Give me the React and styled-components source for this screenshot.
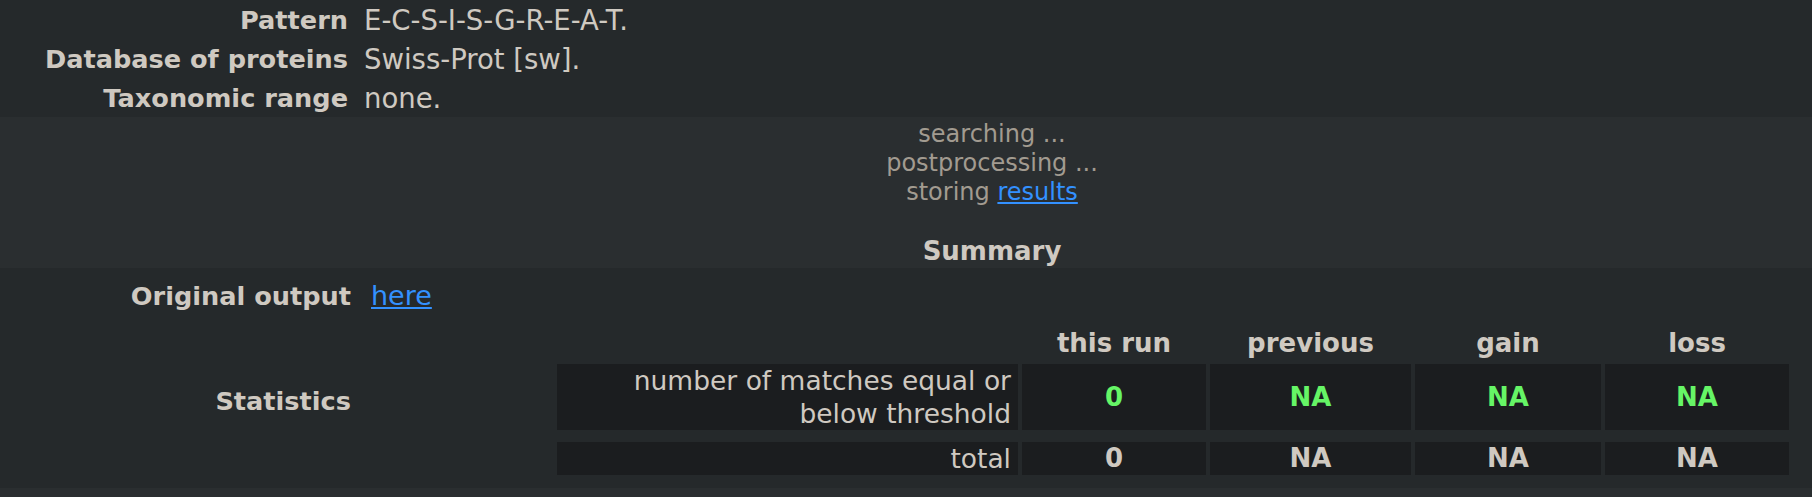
import React from 'react';
import styled, { createGlobalStyle } from 'styled-components';

const GlobalStyle = createGlobalStyle`
  html, body {
    margin: 0;
    padding: 0;
    background: #25292b;
  }
  body {
    font-family: "DejaVu Sans", Verdana, sans-serif;
    color: #cfc9c1;
  }
`;

const Page = styled.div`
  width: 1812px;
  display: flex;
  flex-direction: column;
`;

const InfoTable = styled.div`
  display: grid;
  grid-template-columns: 348px 1fr;
  grid-auto-rows: 39px;
  column-gap: 16px;
  align-items: center;
  height: 117px;
  background: #25292b;
`;

const InfoLabel = styled.div`
  text-align: right;
  font-weight: bold;
  font-size: 25.6px;
  white-space: nowrap;
`;

const InfoValue = styled.div`
  font-size: 27.5px;
  white-space: nowrap;
`;

const Progress = styled.div`
  background: #2a2e30;
  height: 151px;
  box-sizing: border-box;
  padding: 3px 0 0 172px;
  text-align: center;
`;

const ProgressLine = styled.div`
  font-size: 24px;
  line-height: 29px;
  color: #a29b90;
`;

const Link = styled.a`
  color: #3391ff;
  text-decoration: underline;
`;

const SummaryTitle = styled.div`
  margin-top: 28px;
  font-weight: bold;
  font-size: 26px;
  line-height: 33px;
`;

const SummarySection = styled.div`
  display: grid;
  grid-template-columns: 351px 1fr;
  column-gap: 20px;
  row-gap: 9px;
  align-items: center;
  padding: 10px 0 9px;
  background: #25292b;
`;

const SummaryLabel = styled.div`
  text-align: right;
  font-weight: bold;
  font-size: 25.6px;
  line-height: 36px;
  white-space: nowrap;
`;

const SummaryValue = styled.div`
  font-size: 27px;
  line-height: 36px;
`;

const StatsWrap = styled.div`
  display: flex;
  justify-content: flex-end;
  padding: 4px 23px 4px 0;
`;

const StatsTable = styled.div`
  display: grid;
  grid-template-columns: 461px 184px 201px 186px 184px;
  grid-template-rows: 33px 66px 41px;
  column-gap: 4px;
  row-gap: 4px;
`;

const HeadCell = styled.div`
  font-weight: bold;
  font-size: 26px;
  line-height: 33px;
  text-align: center;
`;

const LabelCell = styled.div`
  background: #1b1d1f;
  font-size: 26.5px;
  line-height: 33px;
  text-align: right;
  padding: 0 7px 0 20px;
  margin-top: ${(p) => (p.$spaced ? '8px' : '0')};
`;

const NumCell = styled.div`
  background: #1b1d1f;
  display: flex;
  align-items: center;
  justify-content: center;
  font-weight: bold;
  font-size: 26px;
  line-height: 33px;
  color: ${(p) => (p.$ok ? '#66f566' : '#cfc9c1')};
  margin-top: ${(p) => (p.$spaced ? '8px' : '0')};
`;

const Footer = styled.div`
  height: 9px;
  background: #2a2e30;
`;

const info = [
  ['Pattern', 'E-C-S-I-S-G-R-E-A-T.'],
  ['Database of proteins', 'Swiss-Prot [sw].'],
  ['Taxonomic range', 'none.'],
];

const heads = ['this run', 'previous', 'gain', 'loss'];

export default function App() {
  return (
    <Page>
      <GlobalStyle />
      <InfoTable>
        {info.map(([k, v]) => (
          <React.Fragment key={k}>
            <InfoLabel>{k}</InfoLabel>
            <InfoValue>{v}</InfoValue>
          </React.Fragment>
        ))}
      </InfoTable>

      <Progress>
        <ProgressLine>searching ...</ProgressLine>
        <ProgressLine>postprocessing ...</ProgressLine>
        <ProgressLine>
          storing <Link href="#">results</Link>
        </ProgressLine>
        <SummaryTitle>Summary</SummaryTitle>
      </Progress>

      <SummarySection>
        <SummaryLabel>Original output</SummaryLabel>
        <SummaryValue>
          <Link href="#">here</Link>
        </SummaryValue>
        <SummaryLabel>Statistics</SummaryLabel>
        <StatsWrap>
          <StatsTable>
            <div />
            {heads.map((h) => (
              <HeadCell key={h}>{h}</HeadCell>
            ))}
            <LabelCell>number of matches equal or below threshold</LabelCell>
            <NumCell $ok>0</NumCell>
            <NumCell $ok>NA</NumCell>
            <NumCell $ok>NA</NumCell>
            <NumCell $ok>NA</NumCell>
            <LabelCell $spaced>total</LabelCell>
            <NumCell $spaced>0</NumCell>
            <NumCell $spaced>NA</NumCell>
            <NumCell $spaced>NA</NumCell>
            <NumCell $spaced>NA</NumCell>
          </StatsTable>
        </StatsWrap>
      </SummarySection>

      <Footer />
    </Page>
  );
}
